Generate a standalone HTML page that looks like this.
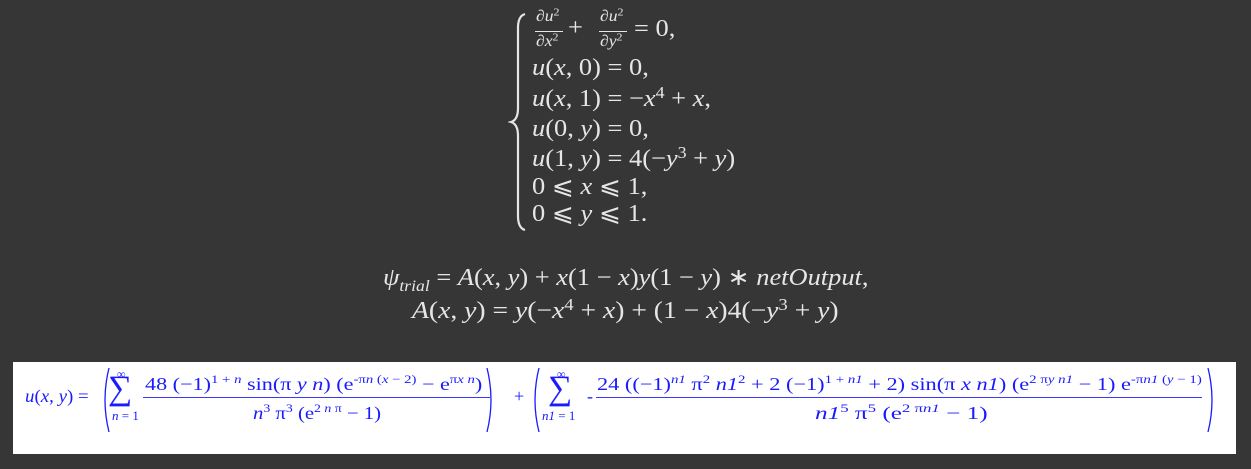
<!DOCTYPE html>
<html><head><meta charset="utf-8"><style>
body{margin:0;width:1251px;height:469px;background:#363636;overflow:hidden;position:relative;font-family:"Liberation Serif",serif}
.t{position:absolute;white-space:nowrap;color:#e6e6e6;font-size:24px;line-height:24px;transform:scaleX(1.1);transform-origin:left top}
i{font-style:italic}
sup{font-size:0.68em;vertical-align:0.5em;line-height:0}
.s{font-size:16px;line-height:16px}
.box{position:absolute;left:13px;top:362px;width:1223px;height:92px;background:#fff}
.b{position:absolute;white-space:nowrap;color:#1a1aff;font-size:18px;line-height:18px;transform:scaleX(1.22);transform-origin:left top}
.b sup{font-size:12px;vertical-align:7px}
.hl{position:absolute;height:1px;background:#3a3aff}
</style></head><body>
<svg style="position:absolute;left:508px;top:12px" width="22" height="220"><path d="M17 2 Q10 4 10 16 L10 96 Q10 108 3 110 Q10 112 10 124 L10 204 Q10 216 17 218" fill="none" stroke="#e6e6e6" stroke-width="2.2"/></svg>
<div class="t s" style="left:536px;top:9px"><i>∂u</i><sup>2</sup></div>
<div class="t s" style="left:536px;top:34px"><i>∂x</i><sup>2</sup></div>
<div style="position:absolute;left:535px;top:31px;width:28px;height:1px;background:#e6e6e6"></div>
<div class="t" style="left:568px;top:16px">+</div>
<div class="t s" style="left:600px;top:9px"><i>∂u</i><sup>2</sup></div>
<div class="t s" style="left:600px;top:34px"><i>∂y</i><sup>2</sup></div>
<div style="position:absolute;left:599px;top:31px;width:28px;height:1px;background:#e6e6e6"></div>
<div class="t" style="left:634px;top:17px">= 0,</div>
<div class="t" style="left:532px;top:56px"><i>u</i>(<i>x</i>, 0) = 0,</div>
<div class="t" style="left:532px;top:87px"><i>u</i>(<i>x</i>, 1) = −<i>x</i><sup>4</sup> + <i>x</i>,</div>
<div class="t" style="left:532px;top:117px"><i>u</i>(0, <i>y</i>) = 0,</div>
<div class="t" style="left:532px;top:147px"><i>u</i>(1, <i>y</i>) = 4(−<i>y</i><sup>3</sup> + <i>y</i>)</div>
<div class="t" style="left:532px;top:175px">0 ⩽ <i>x</i> ⩽ 1,</div>
<div class="t" style="left:532px;top:202px">0 ⩽ <i>y</i> ⩽ 1.</div>

<div class="t" style="left:383px;top:266px;transform:scaleX(1.1)"><i>ψ</i><sub style="font-size:16px"><i>trial</i></sub> = <i>A</i>(<i>x</i>, <i>y</i>) + <i>x</i>(1 − <i>x</i>)<i>y</i>(1 − <i>y</i>) ∗ <i>netOutput</i>,</div>
<div class="t" style="left:412px;top:299px;transform:scaleX(1.15)"><i>A</i>(<i>x</i>, <i>y</i>) = <i>y</i>(−<i>x</i><sup>4</sup> + <i>x</i>) + (1 − <i>x</i>)4(−<i>y</i><sup>3</sup> + <i>y</i>)</div>

<div class="box"></div>
<div class="b" style="left:25px;top:387px;transform:scaleX(1.05)"><i>u</i>(<i>x</i>, <i>y</i>) =</div>
<svg style="position:absolute;left:98px;top:366px" width="14" height="68"><path d="M11 2 Q3 34 11 66" fill="none" stroke="#1a1aff" stroke-width="1.3"/></svg>
<div class="b" style="left:117px;top:365px;font-size:12px;transform:none">∞</div>
<div class="b" style="left:108px;top:372px;font-size:34px;line-height:34px;transform:none">∑</div>
<div class="b" style="left:112px;top:407px;font-size:13px;transform:none"><i>n</i> = 1</div>
<div class="b" style="left:145px;top:375px;transform:scaleX(1.23)">48 (−1)<sup>1 + <i>n</i></sup> sin(π <i>y n</i>) (e<sup>-π<i>n</i> (<i>x</i> − 2)</sup> − e<sup>π<i>x n</i></sup>)</div>
<div class="hl" style="left:143px;top:397px;width:347px"></div>
<div class="b" style="left:253px;top:404px;transform:scaleX(1.15)"><i>n</i><sup>3</sup> π<sup>3</sup> (e<sup>2 <i>n</i> π</sup> − 1)</div>
<svg style="position:absolute;left:484px;top:366px" width="14" height="68"><path d="M3 2 Q11 34 3 66" fill="none" stroke="#1a1aff" stroke-width="1.3"/></svg>
<div class="b" style="left:514px;top:387px;transform:none">+</div>
<svg style="position:absolute;left:528px;top:366px" width="14" height="68"><path d="M11 2 Q3 34 11 66" fill="none" stroke="#1a1aff" stroke-width="1.3"/></svg>
<div class="b" style="left:557px;top:365px;font-size:12px;transform:none">∞</div>
<div class="b" style="left:548px;top:372px;font-size:34px;line-height:34px;transform:none">∑</div>
<div class="b" style="left:542px;top:407px;font-size:13px;transform:none"><i>n1</i> = 1</div>
<div class="b" style="left:587px;top:387px;transform:none">-</div>
<div class="b" style="left:597px;top:375px;transform:scaleX(1.24)">24 ((−1)<sup><i>n1</i></sup> π<sup>2</sup> <i>n1</i><sup>2</sup> + 2 (−1)<sup>1 + <i>n1</i></sup> + 2) sin(π <i>x n1</i>) (e<sup>2 π<i>y n1</i></sup> − 1) e<sup>-π<i>n1</i> (<i>y</i> − 1)</sup></div>
<div class="hl" style="left:596px;top:397px;width:606px"></div>
<div class="b" style="left:815px;top:404px;transform:scaleX(1.4)"><i>n1</i><sup>5</sup> π<sup>5</sup> (e<sup>2 π<i>n1</i></sup> − 1)</div>
<svg style="position:absolute;left:1205px;top:366px" width="14" height="68"><path d="M3 2 Q11 34 3 66" fill="none" stroke="#1a1aff" stroke-width="1.3"/></svg>
</body></html>
